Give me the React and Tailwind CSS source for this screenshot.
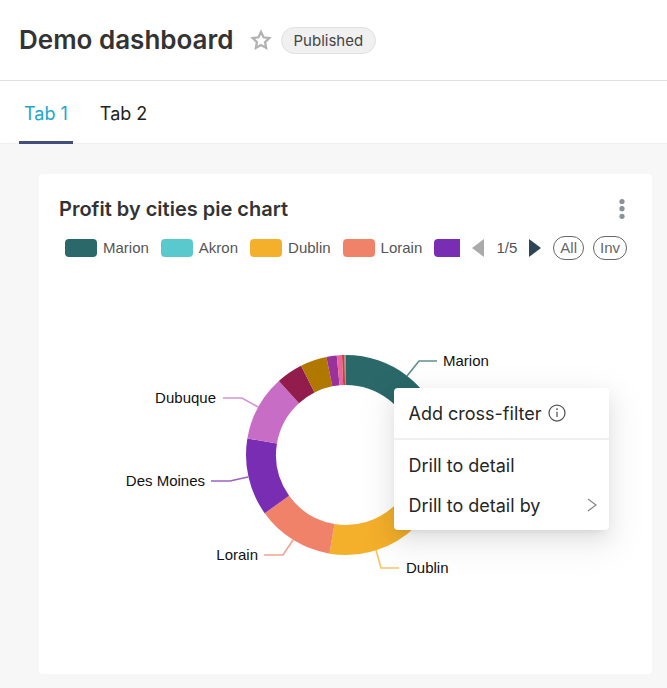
const SLICES = [
  { name: "Marion", color: "#2a686a", from: 0, to: 75 },
  { name: "Akron", color: "#5ac9cd", from: 75, to: 135.5 },
  { name: "Dublin", color: "#f4b02a", from: 135.5, to: 189.5 },
  { name: "Lorain", color: "#f0826a", from: 189.5, to: 234.4 },
  { name: "Des Moines", color: "#792db2", from: 234.4, to: 279.5 },
  { name: "Dubuque", color: "#c86dc6", from: 279.5, to: 317.8 },
  { name: "s7", color: "#921d4d", from: 317.8, to: 333.3 },
  { name: "s8", color: "#b17800", from: 333.3, to: 348.7 },
  { name: "s9", color: "#993399", from: 348.7, to: 354.7 },
  { name: "s10", color: "#e8669c", from: 354.7, to: 357.7 },
  { name: "s11", color: "#d03f35", from: 357.7, to: 359.2 },
  { name: "s12", color: "#7f9dad", from: 359.2, to: 360 },
];

const CALLOUTS = [
  { name: "Marion", color: "#2a686a", line: "61,-79 73,-94 91,-94", x: 97, y: -89, anchor: "start" },
  { name: "Dublin", color: "#f4b02a", line: "30,95 35,113 53,113", x: 60, y: 118, anchor: "start" },
  { name: "Lorain", color: "#f0826a", line: "-53,85 -63,100 -82,100", x: -88, y: 105, anchor: "end" },
  { name: "Des Moines", color: "#792db2", line: "-98,22 -116,26 -135,26", x: -141, y: 31, anchor: "end" },
  { name: "Dubuque", color: "#c86dc6", line: "-88,-48 -104,-57 -123,-57", x: -130, y: -52, anchor: "end" },
];

const LEGEND = SLICES.slice(0, 4);

function point(angle, radius) {
  const a = (angle * Math.PI) / 180;
  return `${(radius * Math.sin(a)).toFixed(2)} ${(-radius * Math.cos(a)).toFixed(2)}`;
}

function arc({ from, to }) {
  return `M${point(from, 100)}A100 100 0 0 1 ${point(to, 100)}L${point(to, 70)}A70 70 0 0 0 ${point(from, 70)}Z`;
}

function Header() {
  return (
    <header className="flex h-[81px] items-center border-b border-[#e0e0e0] px-[19px]">
      <h1 className="text-[26px] leading-8 font-semibold text-[#333]">Demo dashboard</h1>
      <button type="button" aria-label="Favorite" className="ml-[15px] text-[#b2b2b2]">
        <svg width="24" height="24" viewBox="0 0 24 24" fill="none" stroke="currentColor" strokeWidth="2.3">
          <path d="M12 4l2.5 5.3 5.8.8-4.2 4 1 5.8-5.1-2.8-5.1 2.8 1-5.8-4.2-4 5.8-.8z" />
        </svg>
      </button>
      <span className="ml-2 rounded-full border border-[#e0e0e0] bg-[#f0f0f0] px-3 text-[15px] leading-[25px] text-[#444]">
        Published
      </span>
    </header>
  );
}

function Tabs() {
  return (
    <nav role="tablist" className="flex h-[63px] border-b border-[#f0f0f0] px-[19px] text-[18px]">
      <button type="button" role="tab" aria-selected="true" className="-mb-px border-b-[3px] border-[#444e7c] px-[5px] pt-1 text-[#20a7c9]">
        Tab 1
      </button>
      <button type="button" role="tab" aria-selected="false" className="-mb-px ml-[22px] border-b-[3px] border-transparent px-[5px] pt-1 text-[#222]">
        Tab 2
      </button>
    </nav>
  );
}

function Legend() {
  const pill = "h-6 rounded-full border border-[#666] px-1.5 leading-5 text-[#666]";
  return (
    <div className="mt-[14px] flex h-6 items-center pr-[25px] pl-[26px] font-['Liberation_Sans',Arial,sans-serif] text-[15px] text-[#555]">
      <ul className="flex min-w-0 flex-1 items-center gap-3 overflow-hidden">
        {LEGEND.map((s) => (
          <li key={s.name} className="flex shrink-0 items-center gap-1.5">
            <span className="h-[18px] w-8 rounded" style={{ backgroundColor: s.color }} />
            {s.name}
          </li>
        ))}
        <li className="h-[18px] w-8 shrink-0 rounded bg-[#792db2]" />
      </ul>
      <div className="flex shrink-0 items-center gap-3 pl-3">
        <button type="button" aria-label="Previous page">
          <svg width="12" height="18" viewBox="0 0 12 18" fill="#aaa"><path d="M0 9L12 0V18Z" /></svg>
        </button>
        <span>1/5</span>
        <button type="button" aria-label="Next page">
          <svg width="12" height="18" viewBox="0 0 12 18" fill="#2f4554"><path d="M12 9L0 0V18Z" /></svg>
        </button>
        <div className="flex gap-[9px]">
          <button type="button" className={pill}>All</button>
          <button type="button" className={pill}>Inv</button>
        </div>
      </div>
    </div>
  );
}

function Donut() {
  return (
    <svg width="562" height="404" viewBox="-281 -195 562 404" className="shrink-0" role="img" aria-label="Profit by cities">
      {SLICES.map((s) => (
        <path key={s.name} d={arc(s)} fill={s.color} />
      ))}
      {CALLOUTS.map((c) => (
        <g key={c.name}>
          <polyline points={c.line} fill="none" stroke={c.color} strokeWidth="1.6" strokeOpacity="0.75" />
          <text
            x={c.x}
            y={c.y}
            textAnchor={c.anchor}
            className="fill-[#111] font-['Liberation_Sans',Arial,sans-serif] text-[15px]"
          >
            {c.name}
          </text>
        </g>
      ))}
    </svg>
  );
}

function ContextMenu() {
  const item = "flex h-10 w-full items-center px-[15px] text-left";
  return (
    <div
      role="menu"
      className="absolute top-[128px] left-1/2 ml-12 w-[215px] rounded-sm bg-white py-[5px] text-[18px] text-[#262626] shadow-[0_4px_8px_-5px_rgba(0,0,0,0.12),0_8px_20px_rgba(0,0,0,0.08),0_11px_35px_10px_rgba(0,0,0,0.05)]"
    >
      <button type="button" role="menuitem" className={item}>
        Add cross-filter
        <svg className="ml-1.5" width="18" height="18" viewBox="0 0 18 18" fill="none" stroke="#555" strokeWidth="1.25">
          <circle cx="9" cy="9" r="8" />
          <path d="M9 7.7V13" />
          <circle cx="9" cy="5.2" r=".9" fill="#555" stroke="none" />
        </svg>
      </button>
      <div role="separator" className="my-[5px] h-0.5 bg-[#f0f0f0]" />
      <button type="button" role="menuitem" className={item}>Drill to detail</button>
      <button type="button" role="menuitem" className={item}>
        Drill to detail by
        <svg className="mr-[-3px] ml-auto" width="10" height="14" viewBox="0 0 10 14" fill="none" stroke="#888" strokeWidth="1.3">
          <path d="M1 1l8 6-8 6" />
        </svg>
      </button>
    </div>
  );
}

export default function App() {
  return (
    <div className="flex min-h-screen flex-col bg-white font-['Inter',sans-serif]">
      <Header />
      <Tabs />
      <main className="flex-1 bg-[#f7f7f7] pt-[30px] pr-[15px] pb-3.5 pl-[39px]">
        <section className="rounded bg-white pt-5">
          <div className="flex h-7 items-center justify-between px-5 pt-0.5">
            <h2 className="text-[20px] leading-7 font-semibold text-[#333]">Profit by cities pie chart</h2>
            <button type="button" aria-label="More options" className="flex w-5 justify-center">
              <svg width="6" height="22" viewBox="0 0 6 22" fill="#879399">
                <circle cx="3" cy="3.5" r="2.6" />
                <circle cx="3" cy="10.7" r="2.6" />
                <circle cx="3" cy="18.3" r="2.6" />
              </svg>
            </button>
          </div>
          <Legend />
          <div className="relative flex justify-center pb-2.5">
            <Donut />
            <ContextMenu />
          </div>
        </section>
      </main>
    </div>
  );
}
